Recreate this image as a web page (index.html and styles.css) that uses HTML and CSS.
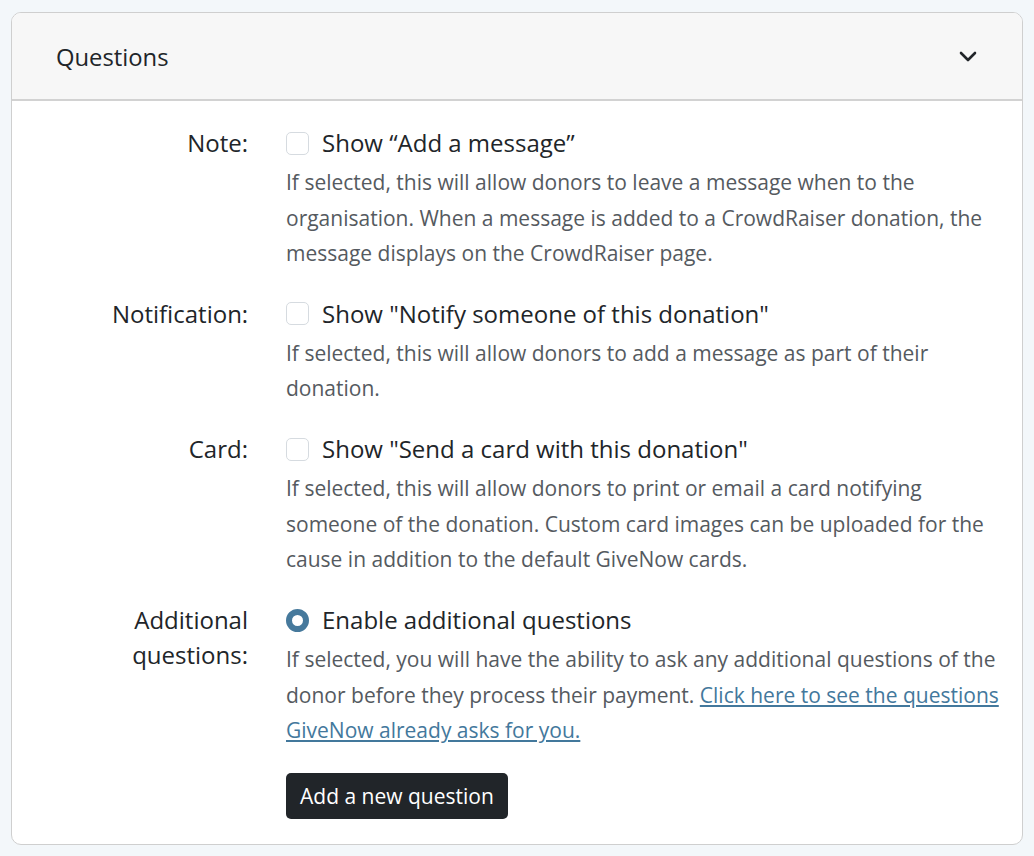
FILE: index.html
```html
<!DOCTYPE html>
<html>
<head>
<meta charset="utf-8">
<link rel="stylesheet" href="styles.css">
</head>
<body>
<div class="card">
  <div class="card-header">
    <span class="title">Questions</span>
    <svg class="chevron" width="20" height="14" viewBox="0 0 20 14"><path d="M3 4 L10 11 L17 4" fill="none" stroke="#212529" stroke-width="2.6" stroke-linecap="round" stroke-linejoin="round"/></svg>
  </div>
  <div class="card-body">
    <div class="row">
      <div class="label">Note:</div>
      <div class="field">
        <div class="option"><span class="checkbox"></span><span>Show “Add a message”</span></div>
        <p class="desc">If selected, this will allow donors to leave a message when to the organisation. When a message is added to a CrowdRaiser donation, the message displays on the CrowdRaiser page.</p>
      </div>
    </div>
    <div class="row">
      <div class="label">Notification:</div>
      <div class="field">
        <div class="option"><span class="checkbox"></span><span>Show "Notify someone of this donation"</span></div>
        <p class="desc">If selected, this will allow donors to add a message as part of their donation.</p>
      </div>
    </div>
    <div class="row">
      <div class="label">Card:</div>
      <div class="field">
        <div class="option"><span class="checkbox"></span><span>Show "Send a card with this donation"</span></div>
        <p class="desc">If selected, this will allow donors to print or email a card notifying someone of the donation. Custom card images can be uploaded for the cause in addition to the default GiveNow cards.</p>
      </div>
    </div>
    <div class="row row-last">
      <div class="label">Additional questions:</div>
      <div class="field">
        <div class="option"><span class="radio"></span><span>Enable additional questions</span></div>
        <p class="desc">If selected, you will have the ability to ask any additional questions of the donor before they process their payment. <a href="#">Click here to see the questions GiveNow already asks for you.</a></p>
        <button class="btn">Add a new question</button>
      </div>
    </div>
  </div>
</div>
</body>
</html>
```
FILE: styles.css
```css
* { box-sizing: border-box; }
html, body { margin: 0; padding: 0; }
body {
  background: #f3f7fa;
  font-family: "Open Sans", "Noto Sans", sans-serif;
  color: #212529;
  padding: 12px 11px 11px 11px;
}
.card {
  background: #fff;
  border: 1px solid #cfcfcf;
  border-radius: 10px;
  overflow: hidden;
}
.card-header {
  background: #f7f7f7;
  border-bottom: 2px solid #d2d2d2;
  height: 88px;
  padding: 0 44px;
  display: flex;
  align-items: center;
  justify-content: space-between;
}
.title { font-size: 23.8px; padding-top: 2px; }
.card-body {
  padding: 24px 14px 25px 0;
  display: flex;
  flex-direction: column;
  gap: 24.3px;
}
.row {
  display: grid;
  grid-template-columns: 236px 1fr;
  column-gap: 38px;
}
.row-last { margin-top: 0.5px; }
.label {
  text-align: right;
  font-size: 24px;
  line-height: 35px;
  padding-left: 100px;
}
.option {
  display: flex;
  align-items: center;
  gap: 13px;
  font-size: 24px;
  line-height: 36px;
}
.checkbox {
  width: 23px; height: 23px;
  border: 1px solid #d6dbe0;
  border-radius: 5px;
  background: #fff;
  flex: none;
}
.radio {
  width: 23px; height: 23px;
  border-radius: 50%;
  background: #fff;
  border: 6.5px solid #46799c;
  flex: none;
}
.desc {
  margin: 4px 0 0;
  font-size: 21px;
  line-height: 35.5px;
  color: #555a5f;
}
.desc a { color: #43789c; text-decoration: underline; }
.btn {
  margin-top: 24px;
  background: #212529;
  color: #fff;
  border: 0;
  border-radius: 5px;
  font-family: inherit;
  font-size: 21px;
  padding: 0 14px;
  height: 46px;
}
```
